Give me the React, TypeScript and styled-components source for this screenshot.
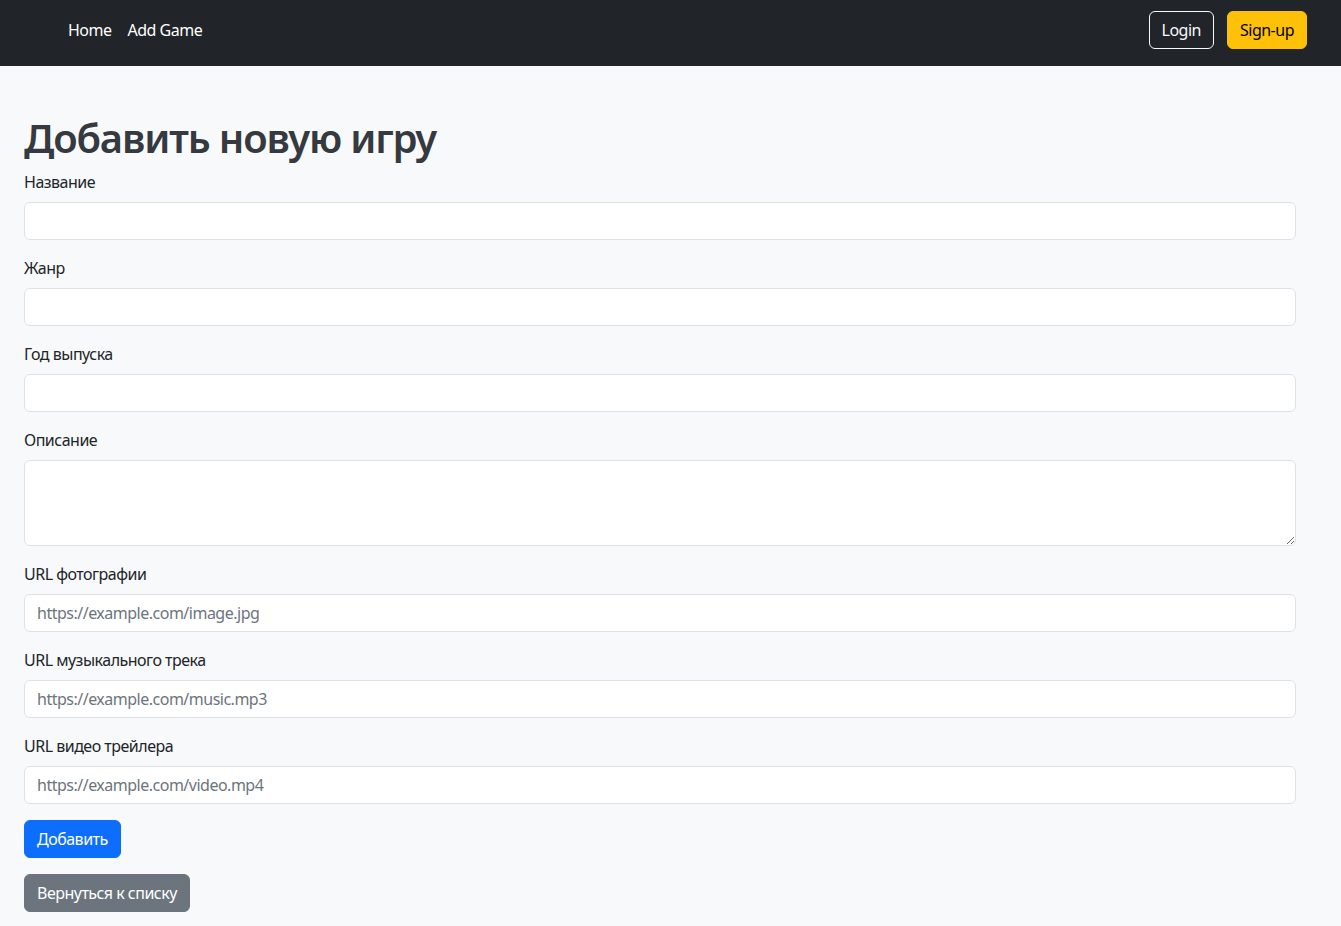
import * as React from "react";
import styled, { createGlobalStyle } from "styled-components";

const GlobalStyle = createGlobalStyle`
  * { box-sizing: border-box; }
  body {
    margin: 0;
    background: #f8f9fa;
    color: #212529;
    font-family: "Segoe UI", "Noto Sans", "Open Sans", sans-serif;
    font-size: 16px;
    line-height: 24px;
    letter-spacing: -0.5px;
  }
`;

const fields = [
  { label: "Название", placeholder: "" },
  { label: "Жанр", placeholder: "" },
  { label: "Год выпуска", placeholder: "" },
  { label: "Описание", placeholder: "", multiline: true },
  { label: "URL фотографии", placeholder: "https://example.com/image.jpg" },
  { label: "URL музыкального трека", placeholder: "https://example.com/music.mp3" },
  { label: "URL видео трейлера", placeholder: "https://example.com/video.mp4" },
];

export default function App() {
  return (
    <>
      <GlobalStyle />
      <Navbar>
        <NavList>
          <NavLink href="#">Home</NavLink>
          <NavLink href="#">Add Game</NavLink>
        </NavList>
        <NavActions>
          <Button variant="outline">Login</Button>
          <Button variant="warning">Sign-up</Button>
        </NavActions>
      </Navbar>
      <Main>
        <Title>Добавить новую игру</Title>
        <form onSubmit={(e) => e.preventDefault()}>
          {fields.map((f) => (
            <Group key={f.label}>
              <Label>{f.label}</Label>
              {f.multiline ? (
                <TextArea rows={3} />
              ) : (
                <Input type="text" placeholder={f.placeholder} />
              )}
            </Group>
          ))}
          <Button variant="primary" type="submit">Добавить</Button>
          <BackRow>
            <Button variant="secondary" type="button">Вернуться к списку</Button>
          </BackRow>
        </form>
      </Main>
    </>
  );
}

const Navbar = styled.nav`
  background-color: #212529;
  display: flex;
  align-items: center;
  justify-content: space-between;
  padding: 10px 34px 16px 60px;
`;

const NavList = styled.div`
  display: flex;
  height: 40px;
  align-items: center;
`;

const NavLink = styled.a`
  color: #fff;
  text-decoration: none;
  padding: 8px;
  font-size: 16px;
  line-height: 24px;
`;

const NavActions = styled.div`
  display: flex;
  gap: 13px;
`;

const colors: Record<string, { bg: string; fg: string; border: string }> = {
  outline: { bg: "transparent", fg: "#f8f9fa", border: "#f8f9fa" },
  warning: { bg: "#ffc107", fg: "#000", border: "#ffc107" },
  primary: { bg: "#0d6efd", fg: "#fff", border: "#0d6efd" },
  secondary: { bg: "#6c757d", fg: "#fff", border: "#6c757d" },
};

const Button = styled.button<{ variant: string }>`
  display: inline-block;
  font-family: inherit;
  font-size: 16px;
  line-height: 24px;
  letter-spacing: -0.5px;
  padding: 6px 12px;
  border-radius: 6px;
  border: 1px solid ${(p) => colors[p.variant].border};
  background: ${(p) => colors[p.variant].bg};
  color: ${(p) => colors[p.variant].fg};
  cursor: pointer;
`;

const Main = styled.main`
  padding: 48px 45px 0 24px;
`;

const Title = styled.h1`
  margin: 0 0 8px;
  font-size: 40px;
  line-height: 48px;
  font-weight: 600;
  letter-spacing: -1.15px;
  color: #343a40;
`;

const Group = styled.div`
  margin-bottom: 16px;
`;

const Label = styled.label`
  display: block;
  margin-bottom: 8px;
`;

const fieldCss = `
  display: block;
  width: 100%;
  font-family: inherit;
  font-size: 16px;
  line-height: 24px;
  letter-spacing: -0.5px;
  padding: 6px 12px;
  color: #212529;
  background: #fff;
  border: 1px solid #dee2e6;
  border-radius: 6px;
  outline: none;
  &::placeholder { color: #6c757d; }
`;

const Input = styled.input`
  ${fieldCss}
  height: 38px;
`;

const TextArea = styled.textarea`
  ${fieldCss}
  height: 86px;
  resize: vertical;
`;

const BackRow = styled.div`
  margin-top: 16px;
`;
